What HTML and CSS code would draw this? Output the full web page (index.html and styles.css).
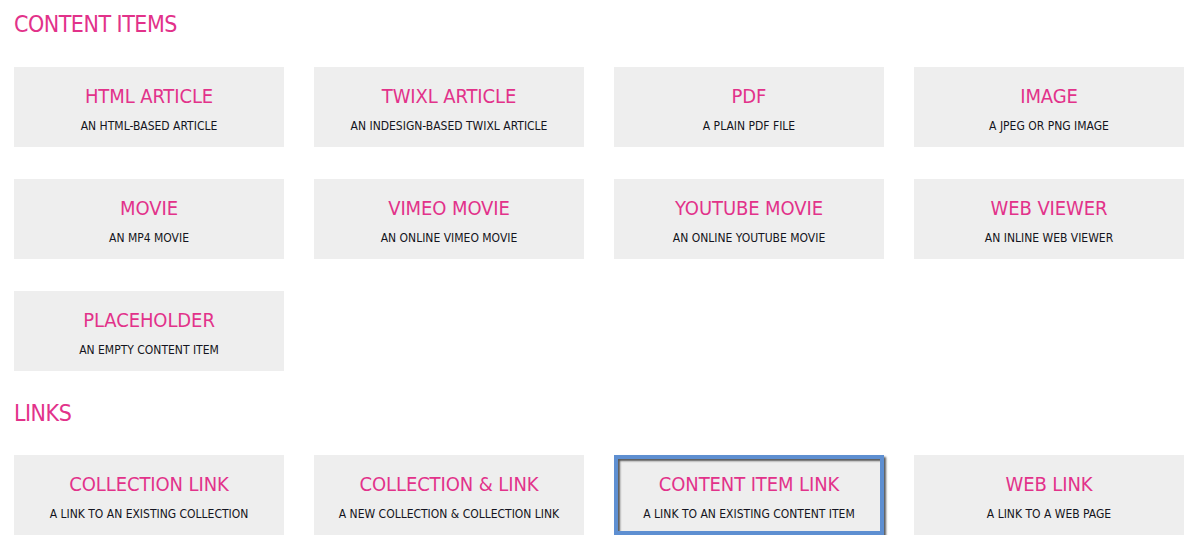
FILE: index.html
```html
<!DOCTYPE html>
<html>
<head>
<meta charset="utf-8">
<link rel="stylesheet" href="styles.css">
</head>
<body>
<div class="page">
  <h2 class="section-title first">CONTENT ITEMS</h2>
  <div class="grid">
    <div class="card"><div class="card-title">HTML ARTICLE</div><div class="card-sub">AN HTML-BASED ARTICLE</div></div>
    <div class="card"><div class="card-title">TWIXL ARTICLE</div><div class="card-sub">AN INDESIGN-BASED TWIXL ARTICLE</div></div>
    <div class="card"><div class="card-title">PDF</div><div class="card-sub">A PLAIN PDF FILE</div></div>
    <div class="card"><div class="card-title">IMAGE</div><div class="card-sub">A JPEG OR PNG IMAGE</div></div>
    <div class="card"><div class="card-title">MOVIE</div><div class="card-sub">AN MP4 MOVIE</div></div>
    <div class="card"><div class="card-title">VIMEO MOVIE</div><div class="card-sub">AN ONLINE VIMEO MOVIE</div></div>
    <div class="card"><div class="card-title">YOUTUBE MOVIE</div><div class="card-sub">AN ONLINE YOUTUBE MOVIE</div></div>
    <div class="card"><div class="card-title">WEB VIEWER</div><div class="card-sub">AN INLINE WEB VIEWER</div></div>
    <div class="card"><div class="card-title">PLACEHOLDER</div><div class="card-sub">AN EMPTY CONTENT ITEM</div></div>
  </div>
  <h2 class="section-title second">LINKS</h2>
  <div class="grid">
    <div class="card"><div class="card-title">COLLECTION LINK</div><div class="card-sub">A LINK TO AN EXISTING COLLECTION</div></div>
    <div class="card"><div class="card-title">COLLECTION &amp; LINK</div><div class="card-sub">A NEW COLLECTION &amp; COLLECTION LINK</div></div>
    <div class="card selected"><div class="card-title">CONTENT ITEM LINK</div><div class="card-sub">A LINK TO AN EXISTING CONTENT ITEM</div></div>
    <div class="card"><div class="card-title">WEB LINK</div><div class="card-sub">A LINK TO A WEB PAGE</div></div>
  </div>
</div>
</body>
</html>
```
FILE: styles.css
```css
html, body {
  margin: 0;
  padding: 0;
  background: #ffffff;
}
body {
  font-family: "DejaVu Sans Condensed", "DejaVu Sans", sans-serif;
}
.page {
  padding: 10px 13px 0 14px;
}
.section-title {
  margin: 0;
  font-size: 23px;
  line-height: 28px;
  font-weight: normal;
  color: #e2328a;
  letter-spacing: -0.5px;
}
.section-title.first {
  margin-bottom: 29px;
}
.section-title.second {
  margin-top: 28px;
  margin-bottom: 28px;
}
.grid {
  display: grid;
  grid-template-columns: repeat(4, 270px);
  column-gap: 30px;
  row-gap: 32px;
}
.card {
  box-sizing: border-box;
  height: 80px;
  background: #eeeeee;
  padding-top: 17px;
  text-align: center;
}
.card-title {
  font-size: 20px;
  line-height: 24px;
  color: #e2328a;
  letter-spacing: -0.1px;
}
.card-sub {
  margin-top: 11px;
  font-size: 12px;
  line-height: 14px;
  color: #141420;
  letter-spacing: 0;
}
.card.selected {
  border: 4px solid #5e8fd1;
  padding-top: 13px;
  box-shadow: 2px 2px 2px #5a5a5a, inset 2px 2px 2px #5a5a5a;
}
```
